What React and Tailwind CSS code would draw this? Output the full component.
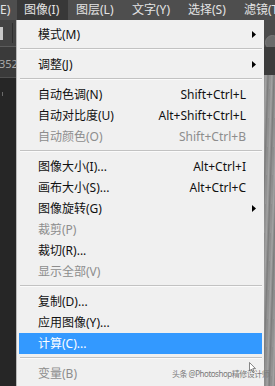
import React from "react";

const menuItems = [
  { label: "模式(M)", sub: true },
  { sep: true },
  { label: "调整(J)", sub: true },
  { sep: true },
  { label: "自动色调(N)", key: "Shift+Ctrl+L" },
  { label: "自动对比度(U)", key: "Alt+Shift+Ctrl+L" },
  { label: "自动颜色(O)", key: "Shift+Ctrl+B", disabled: true },
  { sep: true },
  { label: "图像大小(I)...", key: "Alt+Ctrl+I" },
  { label: "画布大小(S)...", key: "Alt+Ctrl+C" },
  { label: "图像旋转(G)", sub: true },
  { label: "裁剪(P)", disabled: true },
  { label: "裁切(R)..." },
  { label: "显示全部(V)", disabled: true },
  { sep: true },
  { label: "复制(D)..." },
  { label: "应用图像(Y)..." },
  { label: "计算(C)...", active: true },
  { sep: true },
  { label: "变量(B)", disabled: true },
];

const topMenus = ["图层(L)", "文字(Y)", "选择(S)", "滤镜(T)"];

function Arrow() {
  return (
    <svg width="4" height="7" viewBox="0 0 4 7">
      <path d="M0 0 L4 3.5 L0 7 Z" fill="#000" />
    </svg>
  );
}

function App() {
  return (
    <div className="relative w-[275px] h-[386px] overflow-hidden flex flex-col bg-[#282828] font-['Noto_Sans','Noto_Sans_CJK_SC',sans-serif] text-[12px] leading-none">
      {/* Menu bar */}
      <div className="h-[20px] flex items-stretch bg-[#4e4e4e] text-[#e4e4e4] whitespace-nowrap overflow-hidden">
        <div className="w-[17px] shrink-0 flex items-center overflow-hidden">
          <span>E)</span>
        </div>
        <div className="w-[51px] shrink-0 flex items-center pl-[7px] bg-[#383838]">图像(I)</div>
        <div className="w-[1px] shrink-0" />
        {topMenus.map((m) => (
          <div key={m} className="w-[56px] shrink-0 flex items-center pl-[7px]">
            {m}
          </div>
        ))}
      </div>

      <div className="flex flex-1 min-h-0">
        {/* Left panel strip */}
        <div className="w-[16px] shrink-0 flex flex-col overflow-hidden">
          <div className="h-[26px] bg-[#434343] flex items-center">
            <div className="w-[3px] h-[13px] bg-[#c8c8c8]" />
            <div className="ml-[9px] w-px h-[20px] bg-[#2e2e2e]" />
          </div>
          <div className="h-px bg-[#5c5c5c]" />
          <div className="h-[30px] bg-[#3a3a3a] flex items-center text-[11px] text-[#a9a9a9] whitespace-nowrap">
            <span className="-ml-[1px] pt-[3px]">352</span>
          </div>
          <div className="h-px bg-[#505050]" />
          <div className="flex-1 bg-[#262626] pt-[14px]">
            <div className="ml-[2px] w-px h-[4px] bg-[#6a6a6a]" />
          </div>
        </div>

        {/* Dropdown menu */}
        <div className="w-[248px] shrink-0 bg-[#f0f0f0] border-l border-[#b9b9b9] pt-[4px] px-[2px] overflow-hidden">
          {menuItems.map((it, i) =>
            it.sep ? (
              <div key={i} className="h-[9px] pt-[3px] pl-[1px]">
                <div className="h-px bg-[#c2c2c2]" />
                <div className="h-px bg-[#fbfbfb]" />
              </div>
            ) : (
              <div
                key={i}
                className={`h-[21px] flex items-center pl-[19px] whitespace-nowrap ${
                  it.active
                    ? "bg-[#3399ff] text-white"
                    : it.disabled
                    ? "text-[#8d8d8d]"
                    : "text-[#111]"
                }`}
              >
                <span className="flex-1">{it.label}</span>
                {it.key && <span>{it.key}</span>}
                <span className="w-[16px] pl-[6px] flex items-center">
                  {it.sub && <Arrow />}
                </span>
              </div>
            )
          )}
        </div>

        {/* Right canvas strip */}
        <div className="flex-1 flex flex-col overflow-hidden">
          <div className="h-[27px] bg-[#4a4a4a] flex items-end pl-[1px]">
            <div className="w-[15px] h-[15px] shrink-0 rounded-full bg-[#6b6b6b] border border-[#7a7a7a] -mb-[3px]" />
          </div>
          <div className="h-[28px] bg-[#3c3c3c]" />
          <div className="flex-1 bg-[repeating-linear-gradient(92deg,#8c8c8c_0px,#a3a3a3_2px,#7c7c7c_4px,#969696_6px)]" />
        </div>
      </div>

      {/* Watermark */}
      <div className="absolute left-[172px] top-[370px] text-[8px] text-[#7a7a7a] whitespace-nowrap tracking-[-0.5px]">
        头条 @Photoshop精修设计师
      </div>
      {/* Cursor */}
      <svg className="absolute left-[249px] top-[362px]" width="7" height="11" viewBox="0 0 7 11">
        <path d="M0.5 0.5 L0.5 9 L2.5 7 L4 10.5 L5.2 10 L3.8 6.6 L6.5 6.6 Z" fill="#fff" stroke="#555" strokeWidth="0.7" />
      </svg>
    </div>
  );
}

export default App;
